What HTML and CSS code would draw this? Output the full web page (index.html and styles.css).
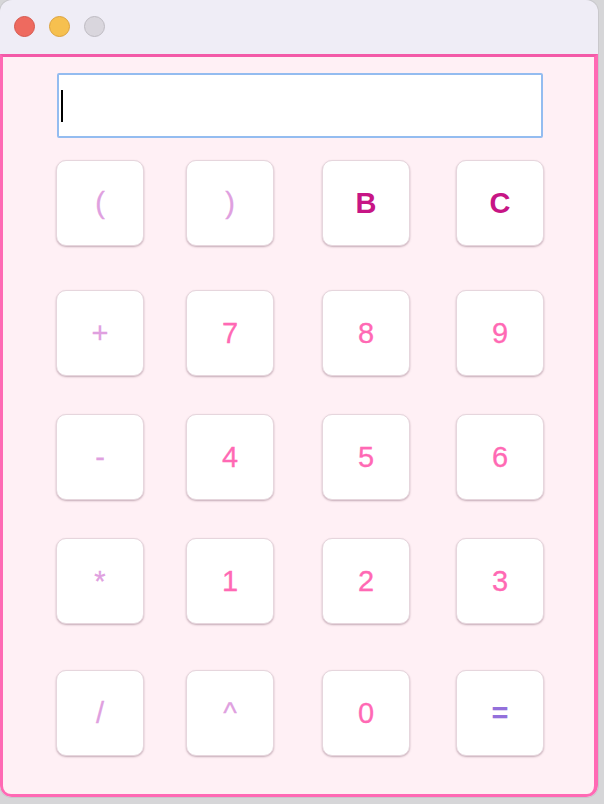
FILE: index.html
```html
<!DOCTYPE html>
<html>
<head>
<meta charset="utf-8">
<link rel="stylesheet" href="styles.css">
</head>
<body>
<div class="window">
  <div class="titlebar">
    <span class="light red"></span>
    <span class="light yellow"></span>
    <span class="light gray"></span>
  </div>
  <div class="content">
    <div class="display"><span class="caret"></span></div>
    <div class="keys">
      <button class="key op">(</button>
      <button class="key op">)</button>
      <button class="key ctl">B</button>
      <button class="key ctl">C</button>

      <button class="key op">+</button>
      <button class="key num">7</button>
      <button class="key num">8</button>
      <button class="key num">9</button>

      <button class="key op">-</button>
      <button class="key num">4</button>
      <button class="key num">5</button>
      <button class="key num">6</button>

      <button class="key op">*</button>
      <button class="key num">1</button>
      <button class="key num">2</button>
      <button class="key num">3</button>

      <button class="key op">/</button>
      <button class="key op">^</button>
      <button class="key num">0</button>
      <button class="key eq">=</button>
    </div>
  </div>
</div>
</body>
</html>
```

FILE: styles.css
```css
html, body {
  margin: 0;
  padding: 0;
}
body {
  width: 604px;
  height: 804px;
  background: #d6d6d8;
  overflow: hidden;
  font-family: "Liberation Sans", Arial, sans-serif;
}
.window {
  width: 598px;
  height: 797px;
  border-radius: 12px;
  overflow: hidden;
  background: #efedf6;
  display: flex;
  flex-direction: column;
  box-shadow: 0 0 0 1px #c9c8cc;
}
.titlebar {
  height: 54px;
  flex: none;
  display: flex;
  align-items: center;
  padding-left: 14px;
  gap: 14px;
  box-sizing: border-box;
  padding-bottom: 2px;
}
.light {
  width: 21px;
  height: 21px;
  border-radius: 50%;
  box-sizing: border-box;
}
.red { background: #ee6a5f; border: 1px solid #d5584e; }
.yellow { background: #f6c04f; border: 1px solid #dca23c; }
.gray { background: #d9d6dd; border: 1px solid #bebbc2; }
.content {
  flex: 1;
  background: #fff0f5;
  border: 3px solid #ff69b4;
  border-right-width: 4px;
  border-top-color: #f35aa8;
  border-radius: 0 0 11px 11px;
  padding: 16px 0 0 53px;
}
.display {
  width: 486px;
  height: 65px;
  box-sizing: border-box;
  background: #fff;
  border: 2px solid #94bcf0;
  border-radius: 2px;
  display: flex;
  align-items: center;
  padding-left: 2px;
  margin-left: 1px;
}
.caret {
  width: 2px;
  height: 32px;
  background: #000;
}
.keys {
  margin-top: 22px;
  display: grid;
  grid-template-columns: 130px 136px 134px 88px;
  grid-template-rows: 130px 124px 124px 132px 86px;
  align-items: start;
  justify-items: start;
}
.key {
  width: 88px;
  height: 86px;
  box-sizing: border-box;
  background: #fff;
  border: 1px solid #e6d6dd;
  border-radius: 10px;
  box-shadow: 0 1px 2px rgba(110, 70, 90, 0.4);
  font-family: "Liberation Sans", Arial, sans-serif;
  font-size: 29px;
  padding: 0;
  display: flex;
  align-items: center;
  justify-content: center;
  -webkit-text-stroke: 0.3px currentColor;
}
.op { color: #dfa0df; }
.num { color: #ff69b4; }
.ctl { color: #c71585; font-weight: bold; -webkit-text-stroke: 0; }
.eq { color: #9370db; font-weight: bold; -webkit-text-stroke: 0; }
```
